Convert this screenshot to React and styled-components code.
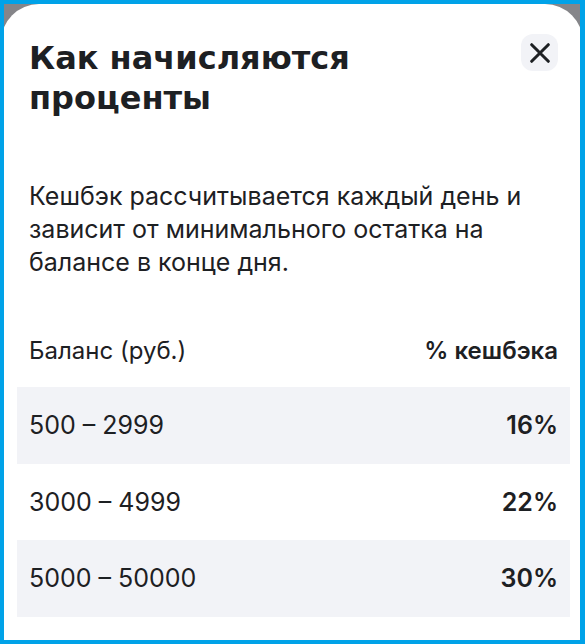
import React from "react"
import styled, { createGlobalStyle } from "styled-components"

const rows = [
  { balance: "500 – 2999", rate: "16%" },
  { balance: "3000 – 4999", rate: "22%" },
  { balance: "5000 – 50000", rate: "30%" },
]

const App = () => (
  <>
    <GlobalStyle />
    <Frame>
      <Sheet>
        <Header>
          <Title>Как начисляются проценты</Title>
          <CloseButton type="button" aria-label="Закрыть">
            <svg width="20" height="20" viewBox="0 0 20 20" aria-hidden="true">
              <path d="M1.7 1.7 18.3 18.3M18.3 1.7 1.7 18.3" />
            </svg>
          </CloseButton>
        </Header>
        <Description>
          Кешбэк рассчитывается каждый день и зависит от минимального остатка
          на балансе в конце дня.
        </Description>
        <Table>
          <thead>
            <Row>
              <HeadCell scope="col">Баланс (руб.)</HeadCell>
              <HeadCell scope="col" $strong>
                % кешбэка
              </HeadCell>
            </Row>
          </thead>
          <tbody>
            {rows.map(({ balance, rate }, index) => (
              <Row key={balance} $shaded={index % 2 === 0}>
                <Cell>{balance}</Cell>
                <Cell $strong>{rate}</Cell>
              </Row>
            ))}
          </tbody>
        </Table>
      </Sheet>
    </Frame>
  </>
)

const GlobalStyle = createGlobalStyle`
  * {
    box-sizing: border-box;
  }
  body {
    margin: 0;
    background: #ffffff;
    color: #1d2023;
    font-family: Inter, "Liberation Sans", sans-serif;
  }
`

const Frame = styled.main`
  min-height: 100vh;
  display: flex;
  margin-right: 1px;
  border: 4px solid #00a2e8;
  border-right-width: 5px;
  background: #858589;
  overflow: hidden;
`

/* slightly wider than the frame, so the rounded corners are cut by its edge */
const Sheet = styled.section`
  flex: 1;
  margin: 0 -3px;
  padding: 30px 13px 20px 16px;
  border-radius: 38px 38px 0 0;
  background: #ffffff;
`

const Header = styled.header`
  display: flex;
  justify-content: space-between;
  align-items: flex-start;
  padding: 0 12px;
`

const Title = styled.h1`
  max-width: 400px;
  margin: 4px 0 0;
  font-family: "DejaVu Sans", sans-serif;
  font-size: 32px;
  line-height: 40px;
  font-weight: 700;
`

const CloseButton = styled.button`
  display: grid;
  place-items: center;
  width: 37px;
  height: 37px;
  padding: 0;
  border: none;
  border-radius: 12px;
  background: #f2f3f7;
  svg {
    fill: none;
    stroke: #1d2023;
    stroke-width: 3;
    stroke-linecap: round;
  }
`

const Description = styled.p`
  margin: 62px 0 34px;
  padding: 0 12px;
  font-size: 25px;
  line-height: 33px;
`

const Table = styled.table`
  width: 100%;
  border-collapse: collapse;
`

const Row = styled.tr`
  height: ${({ $shaded }) => ($shaded ? 77 : 76)}px;
  background: ${({ $shaded }) => ($shaded ? "#f2f3f7" : "transparent")};
  thead & {
    height: 74px;
  }
`

const Cell = styled.td`
  padding: 0 12px;
  font-size: 25px;
  line-height: 33px;
  font-weight: ${({ $strong }) => ($strong ? 600 : 400)};
  text-align: ${({ $strong }) => ($strong ? "right" : "left")};
`

const HeadCell = styled(Cell).attrs({ as: "th" })`
  font-size: 24px;
`

export default App
